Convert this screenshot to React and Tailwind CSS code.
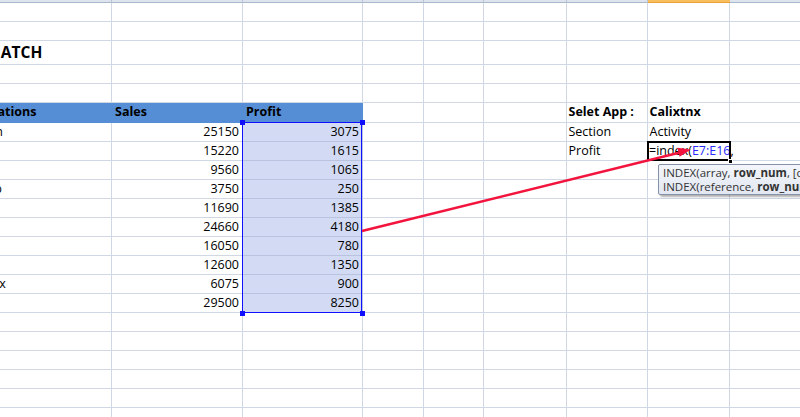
import React from "react";

const COLS = [
  "w-[156px]",
  "w-[131px]",
  "w-[120px]",
  "w-[61px]",
  "w-[60px]",
  "w-[83px]",
  "w-[81px]",
  "w-[82px]",
  "w-[130px]",
];

const DATA = [
  ["WePlan", 25150, 3075],
  ["Slack", 15220, 1615],
  ["Trello", 9560, 1065],
  ["Hitmap", 3750, 250],
  ["Asana", 11690, 1385],
  ["Zoom", 24660, 4180],
  ["Gmail", 16050, 780],
  ["Jira", 12600, 1350],
  ["Toolbox", 6075, 900],
  ["Skype", 29500, 8250],
];

const Cell = ({ i, line = "border-[#d0d7e5]", className = "", children }) => (
  <div
    className={`${COLS[i]} shrink-0 h-full flex items-center whitespace-nowrap border-r border-b ${line} ${className}`}
  >
    {children}
  </div>
);

const EmptyRow = ({ h = "h-[19px]" }) => (
  <div className={`flex ${h}`}>
    {COLS.map((_, i) => (
      <Cell key={i} i={i} />
    ))}
  </div>
);

const ColumnStrip = () => (
  <div className="flex h-[3px]">
    {COLS.map((_, i) =>
      i === 7 ? (
        <div key={i} className={`${COLS[i]} shrink-0 h-full bg-[#f8bd5c] border-b border-[#e9a23a]`} />
      ) : (
        <div
          key={i}
          className={`${COLS[i]} shrink-0 h-full bg-[#dde4ee] border-r border-b border-r-[#b9c5d5] border-b-[#a9b9cd]`}
        />
      )
    )}
  </div>
);

const FormulaCell = () => (
  <div className={`${COLS[7]} shrink-0 h-full relative z-10 flex items-center whitespace-nowrap border-r border-b border-[#d0d7e5] pl-[1px]`}>
    <span>
      =index(<span className="text-[#2a2aff]">E7:E16</span>,
    </span>
    <div className="absolute left-[-1px] top-[-1px] right-[-2px] bottom-[-1px] border-2 border-black" />
    <div className="absolute right-[-4px] bottom-[-4px] w-[5px] h-[5px] bg-black border border-white" />
  </div>
);

const Sheet = () => (
  <div className="relative w-[800px] h-[417px] overflow-hidden bg-white font-['Open_Sans',sans-serif] text-[12.5px] text-black">
    <div className="ml-[-44px] flex flex-col">
      <ColumnStrip />
      <EmptyRow />
      <EmptyRow />
      <div className="flex h-[24px]">
        <Cell i={0} className="pl-[3px] font-bold text-[15.5px]">
          <span className="ml-[-25px]">INDEX MATCH</span>
        </Cell>
        {COLS.slice(1).map((_, i) => (
          <Cell key={i} i={i + 1} />
        ))}
      </div>
      <EmptyRow />
      <EmptyRow />

      {/* table header */}
      <div className="flex h-[20px]">
        <Cell i={0} line="border-[#558ed5]" className="bg-[#558ed5] pl-[3px] font-bold">
          Applications
        </Cell>
        <Cell i={1} line="border-[#558ed5]" className="bg-[#558ed5] pl-[3px] font-bold">
          Sales
        </Cell>
        <Cell i={2} line="border-[#558ed5]" className="bg-[#558ed5] pl-[3px] font-bold">
          Profit
        </Cell>
        <Cell i={3} />
        <Cell i={4} />
        <Cell i={5} />
        <Cell i={6} className="pl-[1.5px] font-bold">
          Selet App :
        </Cell>
        <Cell i={7} className="pl-[1.5px] font-bold">
          Calixtnx
        </Cell>
        <Cell i={8} />
      </div>

      {DATA.map(([name, sales, profit], r) => (
        <div key={name} className="flex h-[19px]">
          <Cell i={0} className="pl-[3px]">
            {name}
          </Cell>
          <Cell i={1} className="justify-end pr-[3px]">
            {sales}
          </Cell>
          <Cell i={2} line="border-[#b9c3df]" className="justify-end pr-[3px] bg-[#d3dbf4]">
            {profit}
          </Cell>
          <Cell i={3} />
          <Cell i={4} />
          <Cell i={5} />
          <Cell i={6} className="pl-[1.5px]">
            {r === 0 ? "Section" : r === 1 ? "Profit" : ""}
          </Cell>
          {r === 1 ? (
            <FormulaCell />
          ) : (
            <Cell i={7} className="pl-[1.5px]">
              {r === 0 ? "Activity" : ""}
            </Cell>
          )}
          <Cell i={8} />
        </div>
      ))}

      <EmptyRow />
      <EmptyRow />
      <EmptyRow />
      <EmptyRow />
      <EmptyRow />
      <EmptyRow />
    </div>

    {/* selected range outline */}
    <div className="absolute left-[242px] top-[122px] w-[120px] h-[191px] border-[1.5px] border-[#1010ff] pointer-events-none">
      <div className="absolute left-[-3.5px] top-[-3.5px] w-[5px] h-[5px] bg-[#1010ff]" />
      <div className="absolute right-[-3.5px] top-[-3.5px] w-[5px] h-[5px] bg-[#1010ff]" />
      <div className="absolute left-[-3.5px] bottom-[-3.5px] w-[5px] h-[5px] bg-[#1010ff]" />
      <div className="absolute right-[-3.5px] bottom-[-3.5px] w-[5px] h-[5px] bg-[#1010ff]" />
    </div>

    {/* function tooltip */}
    <div className="absolute left-[658px] top-[164px] w-[180px] h-[31px] z-20 rounded-[2px] border border-[#8592a8] bg-gradient-to-b from-[#f3f5fa] to-[#e2e7f1] shadow-[2px_2px_2px_rgba(0,0,0,0.3)] pl-[4px] pt-[1px] text-[11.5px] leading-[14px] text-[#333] whitespace-nowrap">
      <div>
        INDEX(array, <b>row_num</b>, [column_num])
      </div>
      <div>
        INDEX(reference, <b>row_num</b>, [column_num], [area_num])
      </div>
    </div>

    {/* arrow */}
    <svg className="absolute left-0 top-0 z-30 pointer-events-none" width="800" height="417">
      <line x1="362" y1="231" x2="680" y2="152.5" stroke="#f3143e" strokeWidth="2.5" />
      <polygon points="691,149.5 679.6,156.8 677.3,147.8" fill="#f3143e" />
    </svg>
  </div>
);

export default function App() {
  return <Sheet />;
}
